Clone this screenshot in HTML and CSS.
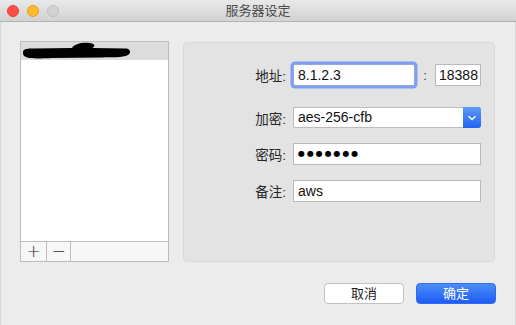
FILE: index.html
```html
<!DOCTYPE html>
<html lang="zh">
<head>
<meta charset="utf-8">
<link rel="stylesheet" href="styles.css">
</head>
<body>
<div class="window">
  <div class="titlebar">
    <div class="lights">
      <span class="light red"></span>
      <span class="light yellow"></span>
      <span class="light gray"></span>
    </div>
    <div class="title">服务器设定</div>
    <div></div>
  </div>
  <div class="main">
    <div class="list">
      <div class="rows">
        <div class="row selected">
          <svg class="blob" width="112" height="20" viewBox="0 0 112 20">
            <path d="M1 11 C1 8 6 7 12 7.5 L50 7 C52 3 60 1 68 2 C74 3 73 6 70 7 L104 7.5 C109 8 109 12 106 14 C100 17 90 16 80 16.5 L30 17 C18 17.5 8 18 4 16 C1 15 1 13 1 11 Z" fill="#000"/>
          </svg>
        </div>
      </div>
      <div class="listbar">
        <span class="lbtn plus">+</span>
        <span class="lbtn minus">−</span>
        <span class="lfill"></span>
      </div>
    </div>
    <div class="panel">
      <div class="frow r1">
        <label class="lab">地址:</label>
        <div class="field focus addr">8.1.2.3</div>
        <span class="colon">:</span>
        <div class="field port">18388</div>
      </div>
      <div class="frow r2">
        <label class="lab">加密:</label>
        <div class="select">
          <span class="sval">aes-256-cfb</span>
          <span class="sbtn">
            <svg width="10" height="6" viewBox="0 0 10 6"><path d="M1.5 1.2 L5 4.5 L8.5 1.2" fill="none" stroke="#fff" stroke-width="1.5"/></svg>
          </span>
        </div>
      </div>
      <div class="frow r3">
        <label class="lab">密码:</label>
        <div class="field wide dots">●●●●●●●</div>
      </div>
      <div class="frow r4">
        <label class="lab">备注:</label>
        <div class="field wide">aws</div>
      </div>
    </div>
  </div>
  <div class="footer">
    <button class="btn cancel">取消</button>
    <button class="btn ok">确定</button>
  </div>
</div>
</body>
</html>
```
FILE: styles.css
```css
* { box-sizing: border-box; }
html, body { margin: 0; padding: 0; }
body {
  width: 516px; height: 325px; overflow: hidden;
  font-family: "Liberation Sans", "Noto Sans CJK SC", sans-serif;
  background: #ececec;
}
.window {
  width: 516px; height: 325px;
  background: #ececec;
  border-left: 1px solid #d6d6d6;
  border-right: 1px solid #d6d6d6;
  display: flex; flex-direction: column;
}
.titlebar {
  height: 22px;
  background: linear-gradient(#e9e9e9, #d2d2d2);
  border-bottom: 1px solid #b3b3b3;
  display: grid;
  grid-template-columns: 1fr auto 1fr;
  align-items: center;
  margin: 0 -1px;
}
.lights { display: flex; gap: 8px; padding-left: 7px; }
.light { width: 12px; height: 12px; border-radius: 50%; display: block; }
.red { background: #fc4d48; border: 1px solid #e0413b; }
.yellow { background: #fdbb2c; border: 1px solid #dfa024; }
.gray { background: #d2d2d2; border: 1px solid #c0c0c0; }
.title { font-size: 13px; color: #4b4b4b; line-height: 22px; }
.main {
  display: flex;
  padding: 19px 20px 0 19px;
  gap: 14px;
  height: 241px;
}
.list {
  width: 149px; height: 221px;
  border: 1px solid #bdbdbd;
  background: #fff;
  display: flex; flex-direction: column;
}
.rows { flex: 1; }
.row { height: 18px; }
.row.selected { background: #dcdcdc; position: relative; }
.blob { position: absolute; left: 1px; top: -1px; }
.listbar {
  height: 20px;
  border-top: 1px solid #bdbdbd;
  background: #f7f7f7;
  display: flex;
}
.lbtn {
  display: flex; align-items: center; justify-content: center;
  border-right: 1px solid #bdbdbd;
  color: #2a2a2a; font-size: 17px; line-height: 1;
  font-family: "DejaVu Sans", sans-serif; font-weight: 200;
}
.plus { width: 26px; }
.minus { width: 24px; }
.lfill { flex: 1; }
.panel {
  margin-top: 1px;
  width: 312px; height: 220px;
  background: #e3e3e3;
  border: 1px solid #d9d9d9;
  border-radius: 4px;
  padding-top: 21px;
}
.frow { display: flex; align-items: center; }
.r2 { margin-top: 21px; }
.r3 { margin-top: 15px; }
.r4 { margin-top: 15px; }
.lab {
  width: 102px; text-align: right;
  font-size: 13.5px; color: #262626;
  margin-right: 7px;
}
.field {
  height: 22px;
  background: #fff;
  border: 1px solid #b9b9b9;
  font-size: 14px; color: #111;
  line-height: 20px;
  padding-left: 4px;
  white-space: nowrap; overflow: hidden;
}
.addr { width: 122px; }
.focus {
  border-color: #8ea8e8;
  box-shadow: 0 0 0 2.5px #7d9ef1;
  border-radius: 2px;
}
.colon { width: 20px; text-align: center; font-size: 13px; color: #333; }
.port { width: 46px; padding-left: 3px; }
.wide { width: 188px; }
.dots {
  font-family: "DejaVu Sans", sans-serif;
  font-size: 8px; letter-spacing: 1.9px; padding-left: 4px;
  color: #000;
}
.select {
  width: 188px; height: 21px;
  display: flex;
  background: #fff;
  border: 1px solid #bcbcbc;
  border-right: none;
  border-radius: 2px 3px 3px 2px;
}
.sval { flex: 1; font-size: 14px; color: #111; line-height: 19px; padding-left: 4px; }
.sbtn {
  width: 18px; margin: -1px 0;
  background: linear-gradient(#5e9af9, #2164f3);
  border-radius: 0 3px 3px 0;
  display: flex; align-items: center; justify-content: center;
}
.footer {
  display: flex; justify-content: flex-end; gap: 12px;
  padding: 20px 19px 0 0;
}
.btn {
  width: 80px; height: 21px;
  border-radius: 4px;
  font-family: "Liberation Sans", "Noto Sans CJK SC", sans-serif;
  font-size: 13px; padding: 0; line-height: 19px;
}
.cancel { background: #fff; border: 1px solid #c2c2c2; color: #1e1e1e; }
.ok {
  background: linear-gradient(#4d8df9, #1c5cf5);
  border: 1px solid #2e6cf2; color: #fff;
}
```
